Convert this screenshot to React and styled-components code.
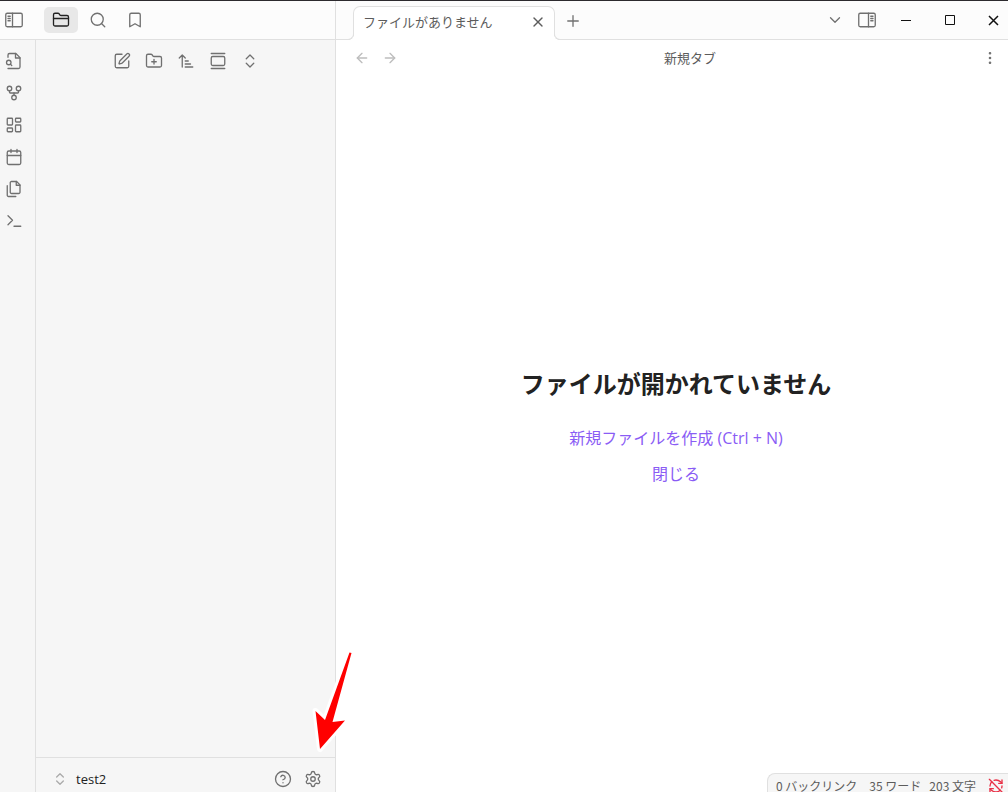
import React from "react";
import styled, { createGlobalStyle } from "styled-components";
import {
  ArrowLeft,
  ArrowRight,
  Bookmark,
  ChevronDown,
  ChevronsUpDown,
  CircleQuestionMark,
  FolderClosed,
  FolderPlus,
  GalleryVertical,
  GitFork,
  LayoutDashboard,
  Plus,
  RefreshCwOff,
  Search,
  Settings,
  SquarePen,
  X,
} from "lucide-react";

const color = {
  border: "#e0e0e0",
  titlebar: "#fcfcfc",
  sidebar: "#f6f6f6",
  active: "#e8e8e8",
  icon: "#707070",
  faint: "#ababab",
  text: "#222222",
  muted: "#5c5c5c",
  accent: "#8a5cf5",
  error: "#e93147",
};

const GlobalStyle = createGlobalStyle`
  *, *::before, *::after { box-sizing: border-box; }
  body {
    margin: 0;
    background: #ffffff;
    color: ${color.text};
    font-family: "Open Sans", "Noto Sans CJK JP", sans-serif;
    font-size: 13px;
    line-height: 20px;
    overflow: hidden;
  }
`;

const Shell = styled.div`
  display: flex;
  flex-direction: column;
  height: 100vh;
  border-top: 1px solid #2c2a2e;
`;

const TitleBar = styled.header`
  display: flex;
  height: 39px;
  flex: none;
  background: ${color.titlebar};
  border-bottom: 1px solid ${color.border};
`;

const SideHeader = styled.div`
  display: flex;
  align-items: center;
  width: 336px;
  flex: none;
  border-right: 1px solid ${color.border};
`;

const PanelTabs = styled.nav`
  display: flex;
  gap: 3px;
  margin-left: 16px;
`;

const IconButton = styled.button`
  display: inline-flex;
  align-items: center;
  justify-content: center;
  flex: none;
  width: ${(p) => p.$w || 28}px;
  height: ${(p) => p.$h || 26}px;
  padding: 0;
  border: 0;
  border-radius: 5px;
  background: ${(p) => (p.$active ? color.active : "transparent")};
  color: ${(p) => p.$color || color.icon};
`;

const WindowButton = styled(IconButton)`
  width: 44px;
  height: 38px;
  border-radius: 0;
  color: #111111;
`;

const CloseWindowButton = styled(WindowButton)`
  width: 36px;
  padding-left: 7px;
`;

const TabStrip = styled.div`
  display: flex;
  flex: 1;
  min-width: 0;
  align-items: flex-end;
  padding-left: 17px;
`;

const Tab = styled.div`
  position: relative;
  display: flex;
  align-items: center;
  justify-content: space-between;
  width: 202px;
  height: 34px;
  margin-bottom: -1px;
  padding: 0 4px 4px 9px;
  background: #ffffff;
  border: 1px solid ${color.border};
  border-bottom: 0;
  border-radius: 7px 7px 0 0;
  color: ${color.muted};

  &::before,
  &::after {
    content: "";
    position: absolute;
    bottom: 0;
    width: 6px;
    height: 6px;
    border-bottom: 1px solid ${color.border};
  }
  &::before {
    left: -6px;
    border-right: 1px solid ${color.border};
    border-bottom-right-radius: 6px;
    box-shadow: 2px 2px 0 #ffffff;
    clip-path: inset(0 -1px 0 0);
  }
  &::after {
    right: -6px;
    border-left: 1px solid ${color.border};
    border-bottom-left-radius: 6px;
    box-shadow: -2px 2px 0 #ffffff;
    clip-path: inset(0 0 0 -1px);
  }
`;

const TabTools = styled.div`
  display: flex;
  align-items: center;
  height: 36px;
  padding-left: 4px;
`;

const WindowTools = styled.div`
  display: flex;
  align-items: center;
  flex: none;
`;

const Workspace = styled.div`
  display: flex;
  flex: 1;
  min-height: 0;
`;

const Ribbon = styled.nav`
  display: flex;
  flex-direction: column;
  width: 36px;
  flex: none;
  padding-top: 5px;
  background: ${color.sidebar};
  border-right: 1px solid ${color.border};
`;

const Sidebar = styled.aside`
  display: flex;
  flex-direction: column;
  width: 300px;
  flex: none;
  background: ${color.sidebar};
  border-right: 1px solid ${color.border};
`;

const FileTools = styled.div`
  display: flex;
  justify-content: center;
  gap: 4px;
  padding-top: 8px;
`;

const VaultBar = styled.footer`
  position: relative;
  display: flex;
  align-items: center;
  margin-top: auto;
  padding: 11px 7px 3px 10px;
  border-top: 1px solid ${color.border};
`;

const VaultSwitch = styled.button`
  display: flex;
  align-items: center;
  gap: 8px;
  flex: 1;
  height: 20px;
  padding: 0 6px;
  border: 0;
  background: transparent;
  color: ${color.text};
  font: 500 13px/20px "Open Sans", sans-serif;

  svg {
    color: ${color.faint};
  }
`;

const Pointer = styled.svg`
  position: absolute;
  right: -23px;
  bottom: 36px;
  z-index: 2;
  pointer-events: none;
`;

const Main = styled.main`
  display: flex;
  flex-direction: column;
  flex: 1;
  min-width: 0;
  background: #ffffff;
`;

const ViewHeader = styled.div`
  display: flex;
  align-items: center;
  height: 36px;
  padding: 0 4px 0 12px;
`;

const ViewTitle = styled.div`
  flex: 1;
  text-align: center;
  color: ${color.muted};
`;

const EmptyState = styled.section`
  display: flex;
  flex: 1;
  flex-direction: column;
  align-items: center;
  justify-content: center;
  padding: 0 0 4px 8px;
`;

const EmptyTitle = styled.h1`
  margin: 0 0 24px;
  font-size: 24px;
  line-height: 36px;
  font-weight: 700;
`;

const ActionLink = styled.a`
  margin-bottom: 12px;
  color: ${color.accent};
  font-size: 16px;
  line-height: 24px;
  text-decoration: none;
`;

const StatusBar = styled.div`
  position: absolute;
  right: 0;
  bottom: 0;
  display: flex;
  align-items: center;
  height: 19px;
  padding: 6px 4px 0 8px;
  background: ${color.sidebar};
  border: solid ${color.border};
  border-width: 1px 0 0 1px;
  border-radius: 8px 0 0 0;
  color: ${color.muted};
  font-family: "Noto Sans CJK JP", sans-serif;
  font-size: 12px;
  line-height: 12px;
  white-space: nowrap;
`;

const StatusItem = styled.span`
  margin-right: ${(p) => p.$gap || 12}px;
`;

const StatusIcon = styled.span`
  display: flex;
  height: 12px;
  align-items: center;
  color: ${color.error};
`;

const Glyph = ({ children, size = 18, sw = 1.75, ...rest }) => (
  <svg
    width={size}
    height={size}
    viewBox="0 0 24 24"
    fill="none"
    stroke="currentColor"
    strokeWidth={sw}
    strokeLinecap="round"
    strokeLinejoin="round"
    {...rest}
  >
    {children}
  </svg>
);

const SidebarToggle = ({ right }) => (
  <Glyph>
    <rect x="1" y="3" width="22" height="18" rx="2" />
    <path d={right ? "M14 3v18" : "M10 3v18"} />
    <path d={right ? "M17 7h3M17 10h3M17 13h3" : "M4 7h3M4 10h3M4 13h3"} />
  </Glyph>
);

const FileSearch = () => (
  <Glyph>
    <path d="M4 22h14a2 2 0 0 0 2-2V7.5L14.5 2H6a2 2 0 0 0-2 2v3" />
    <path d="M14 2v6h6" />
    <circle cx="5" cy="14" r="3" />
    <path d="m9 18-1.5-1.5" />
  </Glyph>
);

const Calendar = () => (
  <Glyph>
    <rect x="3" y="4" width="18" height="18" rx="2" />
    <path d="M16 2v4M8 2v4M3 10h18" />
  </Glyph>
);

const Files = () => (
  <Glyph>
    <path d="M15.5 2H8.6c-.4 0-.8.2-1.1.5-.3.3-.5.7-.5 1.1v12.8c0 .4.2.8.5 1.1.3.3.7.5 1.1.5h9.8c.4 0 .8-.2 1.1-.5.3-.3.5-.7.5-1.1V6.5L15.5 2z" />
    <path d="M3 7.6v12.8c0 .4.2.8.5 1.1.3.3.7.5 1.1.5h9.8" />
    <path d="M15 2v5h5" />
  </Glyph>
);

const Prompt = () => (
  <Glyph>
    <path d="m4 17 6-6-6-6M12 19h9" />
  </Glyph>
);

const SortAscending = () => (
  <Glyph>
    <path d="m3 8 4-4 4 4M7 4v16M11 12h4M11 16h7M11 20h10" />
  </Glyph>
);

const MoreDots = () => (
  <Glyph fill="currentColor" sw={1.5}>
    <circle cx="12" cy="5.7" r="1" />
    <circle cx="12" cy="12" r="1" />
    <circle cx="12" cy="18.3" r="1" />
  </Glyph>
);

const WindowGlyph = ({ d, sw = 1 }) => (
  <svg
    width="11"
    height="11"
    viewBox="0 0 11 11"
    fill="none"
    stroke="currentColor"
    strokeWidth={sw}
  >
    <path d={d} />
  </svg>
);

const line = { size: 18, strokeWidth: 1.75 };

const panels = [
  { label: "ファイル", icon: FolderClosed, active: true },
  { label: "検索", icon: Search },
  { label: "ブックマーク", icon: Bookmark },
];

const ribbon = [
  { label: "クイックスイッチャー", icon: FileSearch },
  { label: "グラフビュー", icon: GitFork },
  { label: "キャンバス", icon: LayoutDashboard },
  { label: "デイリーノート", icon: Calendar },
  { label: "テンプレート", icon: Files },
  { label: "コマンドパレット", icon: Prompt },
];

const fileTools = [
  { label: "新規ノート", icon: SquarePen },
  { label: "新規フォルダ", icon: FolderPlus },
  { label: "並べ替え", icon: SortAscending },
  { label: "自動表示", icon: GalleryVertical },
  { label: "すべて展開", icon: ChevronsUpDown },
];

export default function App() {
  return (
    <>
      <GlobalStyle />
      <Shell>
        <TitleBar>
          <SideHeader>
            <IconButton aria-label="左サイドバー">
              <SidebarToggle />
            </IconButton>
            <PanelTabs>
              {panels.map(({ label, icon: Icon, active }) => (
                <IconButton
                  key={label}
                  aria-label={label}
                  $w={34}
                  $active={active}
                  $color={active ? color.text : undefined}
                >
                  <Icon {...line} />
                </IconButton>
              ))}
            </PanelTabs>
          </SideHeader>
          <TabStrip>
            <Tab>
              <span>ファイルがありません</span>
              <IconButton aria-label="タブを閉じる" $w={24} $h={24} $color={color.muted}>
                <X size={16} strokeWidth={2} />
              </IconButton>
            </Tab>
            <TabTools>
              <IconButton aria-label="新しいタブ">
                <Plus {...line} />
              </IconButton>
            </TabTools>
          </TabStrip>
          <WindowTools>
            <IconButton aria-label="タブ一覧" $w={30}>
              <ChevronDown {...line} />
            </IconButton>
            <IconButton aria-label="右サイドバー" $w={34}>
              <SidebarToggle right />
            </IconButton>
            <WindowButton aria-label="最小化">
              <WindowGlyph d="M0 5.5h10" />
            </WindowButton>
            <WindowButton aria-label="最大化">
              <WindowGlyph d="M.5 .5h9v9h-9z" />
            </WindowButton>
            <CloseWindowButton aria-label="閉じる">
              <WindowGlyph d="M1 1l9 9M10 1l-9 9" sw={1.5} />
            </CloseWindowButton>
          </WindowTools>
        </TitleBar>
        <Workspace>
          <Ribbon>
            {ribbon.map(({ label, icon: Icon }) => (
              <IconButton key={label} aria-label={label} $h={32}>
                <Icon {...line} />
              </IconButton>
            ))}
          </Ribbon>
          <Sidebar>
            <FileTools>
              {fileTools.map(({ label, icon: Icon }) => (
                <IconButton key={label} aria-label={label}>
                  <Icon {...line} />
                </IconButton>
              ))}
            </FileTools>
            <VaultBar>
              <VaultSwitch>
                <ChevronsUpDown size={16} strokeWidth={2} />
                test2
              </VaultSwitch>
              <IconButton aria-label="ヘルプ" $w={30} $h={20}>
                <CircleQuestionMark {...line} />
              </IconButton>
              <IconButton aria-label="設定" $w={30} $h={20}>
                <Settings {...line} />
              </IconButton>
              <Pointer width="48" height="108" viewBox="0 0 48 108" aria-hidden="true">
                <path
                  d="M39.500 4.500 41.500 5 22.500 74 35 72.500 10 101 5.500 63 15 72z"
                  fill="#ff0000"
                  stroke="#ffffff"
                  strokeWidth="6"
                  strokeLinejoin="round"
                  paintOrder="stroke"
                />
              </Pointer>
            </VaultBar>
          </Sidebar>
          <Main>
            <ViewHeader>
              <IconButton aria-label="戻る" $color="#bdbdbd">
                <ArrowLeft size={16} strokeWidth={2} />
              </IconButton>
              <IconButton aria-label="進む" $color="#bdbdbd">
                <ArrowRight size={16} strokeWidth={2} />
              </IconButton>
              <ViewTitle>新規タブ</ViewTitle>
              <IconButton aria-label="その他">
                <MoreDots />
              </IconButton>
            </ViewHeader>
            <EmptyState>
              <EmptyTitle>ファイルが開かれていません</EmptyTitle>
              <ActionLink href="#new">新規ファイルを作成 (Ctrl + N)</ActionLink>
              <ActionLink href="#close">閉じる</ActionLink>
            </EmptyState>
          </Main>
        </Workspace>
        <StatusBar>
          <StatusItem>0 バックリンク</StatusItem>
          <StatusItem $gap={8}>35 ワード</StatusItem>
          <StatusItem>203 文字</StatusItem>
          <StatusIcon>
            <RefreshCwOff size={16} strokeWidth={2} />
          </StatusIcon>
        </StatusBar>
      </Shell>
    </>
  );
}
